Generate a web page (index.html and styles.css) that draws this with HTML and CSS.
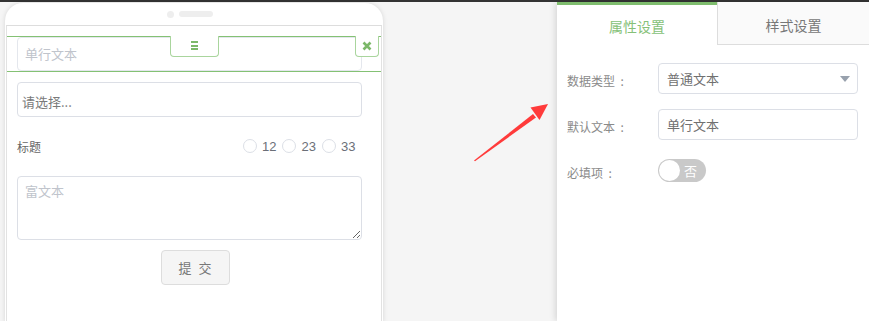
FILE: index.html
```html
<!DOCTYPE html>
<html lang="zh">
<head>
<meta charset="utf-8">
<link rel="stylesheet" href="styles.css">
</head>
<body>
<div class="topbar"></div>
<div class="main">
  <div class="phone">
    <div class="phone-head">
      <span class="cam"></span>
      <span class="speaker"></span>
    </div>
    <div class="screen">
      <div class="field-row selected">
        <div class="input placeholder">单行文本</div>
        <div class="drag-handle">
          <span class="bar"></span><span class="bar"></span><span class="bar"></span>
        </div>
        <div class="close-btn">
          <svg width="10" height="10" viewBox="0 0 10 10"><path d="M1.5 1.5 L8.5 8.5 M8.5 1.5 L1.5 8.5" stroke="#7cb869" stroke-width="2.6" stroke-linecap="butt"/></svg>
        </div>
      </div>
      <div class="select-box">请选择...</div>
      <div class="radio-row">
        <span class="radio-label">标题</span>
        <div class="radios">
          <span class="radio"><span class="circle"></span>12</span>
          <span class="radio"><span class="circle"></span>23</span>
          <span class="radio"><span class="circle"></span>33</span>
        </div>
      </div>
      <textarea class="rich" placeholder="富文本"></textarea>
      <div class="btn-wrap"><button class="submit">提 交</button></div>
    </div>
  </div>
  <div class="gap-area">
    <svg class="arrow" width="174" height="200" viewBox="383 0 174 200">
      <polygon points="474,158.5 533,112 536,115.5 475,159.3" fill="#ff3b3b"/>
      <polygon points="548,102 530.5,105.5 539.5,118" fill="#ff3b3b"/>
    </svg>
  </div>
  <div class="panel">
    <div class="tabs">
      <div class="tab active">属性设置</div>
      <div class="tab">样式设置</div>
    </div>
    <div class="form">
      <div class="form-row">
        <span class="form-label">数据类型&nbsp;&nbsp;:</span>
        <div class="ctrl select-ctrl">普通文本<span class="caret"></span></div>
      </div>
      <div class="form-row">
        <span class="form-label">默认文本&nbsp;&nbsp;:</span>
        <div class="ctrl">单行文本</div>
      </div>
      <div class="form-row switch-row">
        <span class="form-label">必填项&nbsp;&nbsp;:</span>
        <div class="switch"><span class="knob"></span><span class="switch-text">否</span></div>
      </div>
    </div>
  </div>
</div>
</body>
</html>
```
FILE: styles.css
```css
* { box-sizing: border-box; }
html, body { margin: 0; padding: 0; }
body {
  width: 869px;
  height: 321px;
  overflow: hidden;
  background: #f5f5f5;
  font-family: "Noto Sans CJK SC", "Noto Sans", sans-serif;
  font-size: 13px;
  color: #606266;
}
.topbar { height: 2px; background: #333; }
.main { display: flex; height: 319px; align-items: flex-start; }

.phone {
  margin-left: 5px;
  margin-top: 1px;
  width: 378px;
  height: 320px;
  background: #fff;
  border-radius: 18px 18px 0 0;
  box-shadow: 0 0 5px rgba(0,0,0,0.13);
  display: flex;
  flex-direction: column;
}
.phone-head {
  height: 22px;
  display: flex;
  align-items: center;
  padding-left: 162px;
  gap: 5px;
}
.cam { width: 7px; height: 7px; border-radius: 50%; background: #eee; }
.speaker { width: 34px; height: 6px; border-radius: 3px; background: #eee; }
.screen {
  flex: 1;
  margin: 0 1px;
  border-top: 1px solid #ddd;
  border-left: 1px solid #e2e2e2;
  border-right: 1px solid #e2e2e2;
}
.field-row.selected {
  position: relative;
  margin-top: 10px;
  border-top: 1px solid #84c174;
  border-bottom: 1px solid #84c174;
  padding: 0 18px 0 10px;
}
.input {
  height: 34px;
  width: 345px;
  border: 1px solid #e4e7ed;
  border-radius: 4px;
  padding-left: 7px;
  line-height: 32px;
}
.placeholder { color: #c0c4cc; }
.drag-handle {
  position: absolute;
  left: 163px;
  top: -1px;
  width: 49px;
  height: 21px;
  border: 1px solid #a9d59d;
  border-top: none;
  border-radius: 0 0 4px 4px;
  background: #fff;
  display: flex;
  flex-direction: column;
  align-items: center;
  padding-top: 5px;
  gap: 1.7px;
}
.bar { width: 7px; height: 2px; background: #7cb869; }
.close-btn {
  position: absolute;
  left: 348px;
  top: -1px;
  width: 24px;
  height: 21px;
  border: 1px solid #a9d59d;
  border-top: none;
  border-radius: 0 0 4px 4px;
  background: #fff;
  display: flex;
  align-items: center;
  justify-content: center;
}
.select-box {
  margin: 10px 0 0 10px;
  width: 345px;
  height: 35px;
  border: 1px solid #dcdfe6;
  border-radius: 4px;
  padding-left: 4px;
  line-height: 33px;
  color: #7a7a7a;
  padding-top: 2px;
}
.radio-row {
  display: flex;
  align-items: center;
  height: 20px;
  margin: 19px 0 0 10px;
}
.radio-label { flex: 0 0 226px; color: #666; font-size: 12px; }
.radios { display: flex; gap: 6px; font-family: "Liberation Sans", Arial, sans-serif; font-size: 13px; color: #6b6f78; }
.radio { display: flex; align-items: center; gap: 5px; }
.circle { width: 14px; height: 14px; border-radius: 50%; border: 1px solid #dcdfe6; background: #fff; }
.rich {
  display: block;
  margin: 20px 0 0 10px;
  width: 345px;
  height: 64px;
  border: 1px solid #dcdfe6;
  border-radius: 4px;
  padding: 5px 7px;
  font-family: "Noto Sans CJK SC", sans-serif;
  font-size: 13px;
  line-height: 18px;
  resize: vertical;
  outline: none;
}
.rich::placeholder { color: #c0c4cc; }
.btn-wrap { display: flex; justify-content: center; margin-top: 10px; padding-left: 2px; }
.submit {
  width: 69px;
  height: 35px;
  background: #f5f5f5;
  border: 1px solid #ddd;
  border-radius: 4px;
  font-family: "Noto Sans CJK SC", sans-serif;
  font-size: 13px;
  color: #777;
  letter-spacing: 2px;
  padding-left: 8px;
}

.gap-area { flex: 0 0 174px; height: 200px; }
.arrow { display: block; }

.panel {
  flex: 0 0 312px;
  margin-top: 0;
  height: 319px;
  background: #fff;
  box-shadow: -2px 0 6px rgba(0,0,0,0.12);
}
.tabs { display: flex; height: 43px; }
.tab {
  display: flex;
  align-items: center;
  justify-content: center;
  font-size: 14px;
}
.tab.active {
  flex: 0 0 160px;
  border-top: 3px solid #7fbd6e;
  color: #86c178;
  padding-top: 1px;
}
.tab:not(.active) {
  flex: 1;
  background: #fafafa;
  border-left: 1px solid #ddd;
  border-bottom: 1px solid #ddd;
  color: #777;
  padding-top: 4px;
}
.form { padding: 18px 11px 0 10px; }
.form-row { display: flex; align-items: center; height: 31px; margin-bottom: 15px; }
.form-row.switch-row { margin-top: 2px; }
.form-label { flex: 0 0 91px; font-size: 12px; color: #8a8a8a; padding-top: 3px; }
.ctrl {
  width: 200px;
  height: 31px;
  border: 1px solid #dcdfe6;
  border-radius: 4px;
  padding-left: 8px;
  line-height: 29px;
  font-size: 13px;
  color: #707070;
  position: relative;
}
.caret {
  position: absolute;
  right: 7px;
  top: 12px;
  width: 0;
  height: 0;
  border-left: 5px solid transparent;
  border-right: 5px solid transparent;
  border-top: 6px solid #98a1ad;
}
.switch {
  width: 48px;
  height: 23px;
  border-radius: 12px;
  background: #c9c9c9;
  display: flex;
  align-items: center;
  padding-left: 1px;
}
.knob { width: 21px; height: 21px; border-radius: 50%; background: #fff; }
.switch-text { color: #fff; font-size: 13px; margin-left: 4px; }
```
